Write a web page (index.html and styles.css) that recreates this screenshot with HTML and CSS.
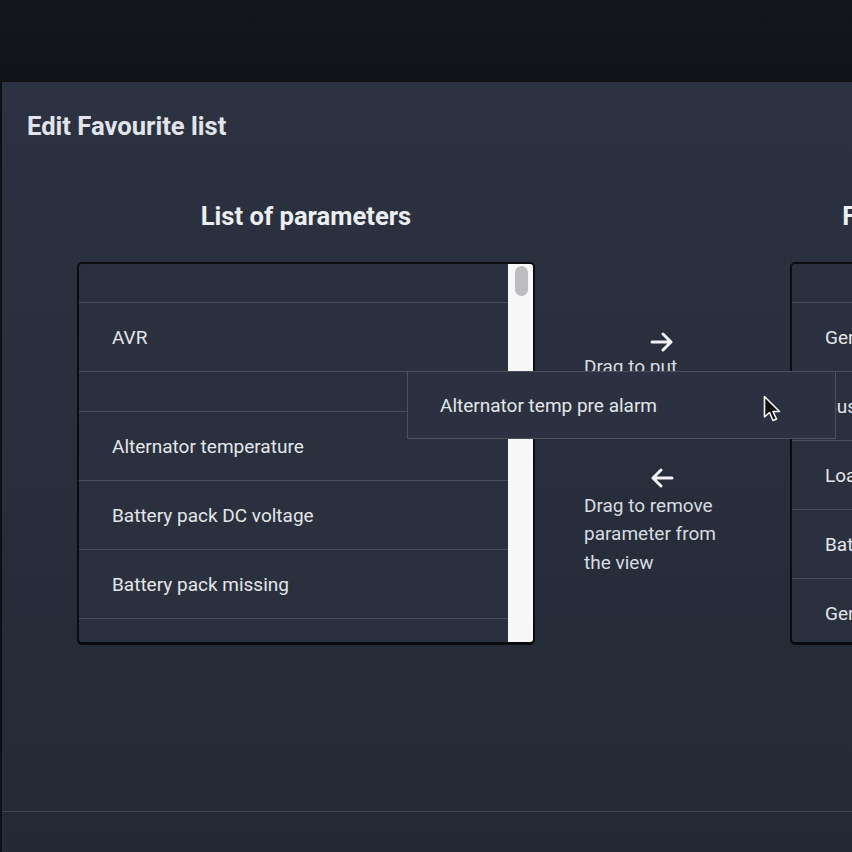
FILE: index.html
```html
<!DOCTYPE html>
<html lang="en">
<head>
    <meta charset="UTF-8">
    <meta name="viewport" content="width=device-width, initial-scale=1.0">
    <title>Edit Favourite list</title>
    <link rel="stylesheet" href="styles.css">
</head>
<body>

    <div class="topbar"></div>

    <div class="modal">
        <h2 class="modal-title">Edit Favourite list</h2>

        <div class="columns">
            <!-- Lista de parametros disponiveis -->
            <div class="column column-left">
                <h3 class="column-title">List of parameters</h3>
                <div class="list-box">
                    <div class="list-rows">
                        <div class="row row-partial"></div>
                        <div class="row">AVR</div>
                        <div class="row row-placeholder"></div>
                        <div class="row">Alternator temperature</div>
                        <div class="row">Battery pack DC voltage</div>
                        <div class="row">Battery pack missing</div>
                        <div class="row">Battery temperature</div>
                    </div>
                    <div class="scrollbar"><div class="scroll-thumb"></div></div>
                </div>
            </div>

            <!-- Instrucoes -->
            <div class="column column-middle">
                <div class="hint">
                    <svg class="hint-arrow" width="24" height="20" viewBox="0 0 24 20">
                        <path d="M2 10 H21 M13 2 L21 10 L13 18" fill="none" stroke="#f2f3f5" stroke-width="3" stroke-linecap="round" stroke-linejoin="round"/>
                    </svg>
                    <p class="hint-text">Drag to put parameter in the view</p>
                </div>
                <div class="hint hint-second">
                    <svg class="hint-arrow" width="24" height="20" viewBox="0 0 24 20">
                        <path d="M22 10 H3 M11 2 L3 10 L11 18" fill="none" stroke="#f2f3f5" stroke-width="3" stroke-linecap="round" stroke-linejoin="round"/>
                    </svg>
                    <p class="hint-text">Drag to remove parameter from the view</p>
                </div>
            </div>

            <!-- Lista de favoritos -->
            <div class="column column-right">
                <h3 class="column-title">Favourite parameters</h3>
                <div class="list-box">
                    <div class="list-rows">
                        <div class="row row-partial"></div>
                        <div class="row">Generator voltage</div>
                        <div class="row">Bus voltage</div>
                        <div class="row">Load power</div>
                        <div class="row">Battery voltage</div>
                        <div class="row">Generator frequency</div>
                    </div>
                </div>
            </div>
        </div>

        <!-- Item sendo arrastado -->
        <div class="drag-item">Alternator temp pre alarm</div>

        <svg class="cursor" width="18" height="28" viewBox="0 0 18 28">
            <path d="M1.5 1.5 V22 L6.5 17.5 L10 25.5 L13.5 24 L10 16.5 L16.5 16.5 Z" fill="#111" stroke="#f4f4f4" stroke-width="1.6" stroke-linejoin="round"/>
        </svg>

        <div class="modal-footer"></div>
    </div>

</body>
</html>
```

FILE: styles.css
```css
 /* Pagina */
 body {
     margin: 0;
     padding: 0;
     height: 852px;
     overflow: hidden;
     background-color: #0e1016;
     font-family: Roboto, "Noto Sans", sans-serif;
     color: #e3e5e9;
 }

 .topbar {
     height: 82px;
     background: linear-gradient(#15171d, #101218);
 }

 /* Janela de edicao */
 .modal {
     position: relative;
     margin-left: 2px;
     height: 770px;
     display: flex;
     flex-direction: column;
     overflow: hidden;
     background: linear-gradient(#2c3241, #242935);
 }

 .modal-title {
     margin: 0;
     padding: 29px 0 0 25px;
     font-size: 25.6px;
     line-height: 30px;
     font-weight: 700;
     color: #e2e4e9;
 }

 .columns {
     flex: 1;
     display: flex;
     padding: 60px 0 0 75px;
 }

 .column {
     flex-shrink: 0;
 }

 .column-left {
     width: 458px;
 }

 .column-middle {
     width: 255px;
     padding-top: 131px;
 }

 .column-right {
     width: 350px;
 }

 .column-title {
     margin: 0 0 31px;
     font-size: 25.6px;
     line-height: 30px;
     font-weight: 700;
     text-align: center;
     color: #eceef1;
 }

 /* Caixa da lista */
 .list-box {
     display: flex;
     height: 382px;
     box-sizing: border-box;
     border: 2px solid #0a0c11;
     border-radius: 5px;
     overflow: hidden;
     background-color: #2a303d;
     box-shadow: 0 1px 0 #0a0c11;
 }

 .list-rows {
     flex: 1;
     overflow: hidden;
 }

 .row {
     display: flex;
     align-items: center;
     height: 68px;
     padding-left: 33px;
     border-bottom: 1px solid #4a505c;
     font-size: 19px;
     white-space: nowrap;
     color: #e4e6ea;
 }

 .row-partial {
     height: 38px;
 }

 .row-placeholder {
     height: 39px;
 }

 .scrollbar {
     width: 25px;
     background-color: #f7f7f8;
 }

 .scroll-thumb {
     width: 13px;
     height: 30px;
     margin: 2px 0 0 7px;
     border-radius: 7px;
     background-color: #bdbdbf;
 }

 /* Instrucoes do meio */
 .hint {
     width: 156px;
     margin-left: 49px;
     text-align: center;
 }

 .hint-second {
     margin-top: 29px;
 }

 .hint-arrow {
     display: block;
     margin: 0 auto 1px;
 }

 .hint-second .hint-arrow {
     margin-bottom: 4px;
 }

 .hint-text {
     margin: 0;
     padding-right: 10px;
     font-size: 19px;
     line-height: 28.5px;
     text-align: left;
     color: #d9dce1;
 }

 /* Item arrastado por cima da lista */
 .drag-item {
     position: absolute;
     left: 405px;
     top: 289px;
     width: 429px;
     height: 68px;
     box-sizing: border-box;
     display: flex;
     align-items: center;
     padding-left: 32px;
     border: 1px solid #4b515d;
     background-color: #2b3140;
     font-size: 19px;
     color: #e4e6ea;
 }

 .cursor {
     position: absolute;
     left: 761px;
     top: 313px;
 }

 .modal-footer {
     height: 40px;
     border-top: 1px solid #3e4450;
 }
```
